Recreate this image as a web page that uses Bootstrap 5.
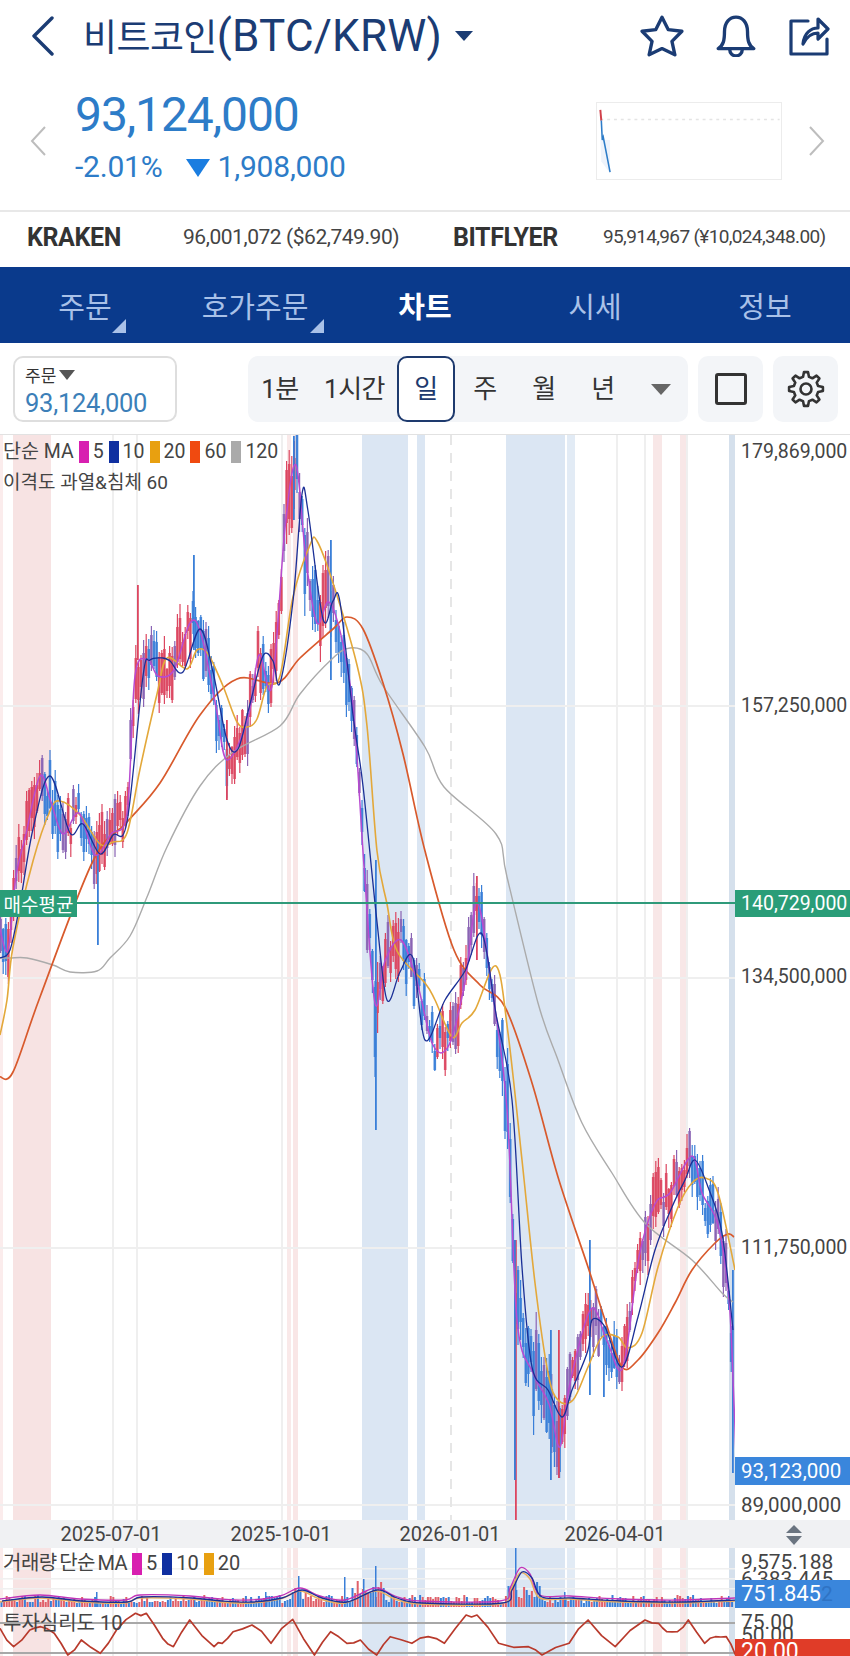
<!DOCTYPE html>
<html lang="ko">
<head>
<meta charset="utf-8">
<title>비트코인 차트</title>
<link href="https://cdn.jsdelivr.net/npm/bootstrap@5.3.0/dist/css/bootstrap.min.css" rel="stylesheet">
<style>
html,body{margin:0;background:#fff}
body{width:850px;height:1656px;overflow:hidden;font-family:Roboto,"Noto Sans CJK KR",sans-serif;color:#333}
.hdr{height:72px;padding-left:31px;padding-right:20px;color:#1b3c74}
.hdr-chev{width:24px;height:40px}
.hdr-title{margin-left:28px;line-height:1;white-space:nowrap}
.hdr-kr{font-size:37px;letter-spacing:-.6px;font-family:"Noto Sans CJK KR",sans-serif}
.hdr-en{font-size:44px;letter-spacing:.2px}
.hdr-caret{width:0;height:0;margin-left:13px;border-left:9px solid transparent;border-right:9px solid transparent;border-top:10px solid #1b3c74}
.hdr-ico{margin-left:30px}
.pr{height:138px;padding-left:30px;padding-right:25px}
.pr-chev{width:16px;height:30px}
.pr-col{margin-left:29px;margin-bottom:8px;color:#2d7cc8}
.pr-big{font-size:48px;line-height:50px;letter-spacing:-1.1px}
.pr-sub{font-size:30px;line-height:34px;margin-top:10px;letter-spacing:-.2px;white-space:nowrap}
.pr-tri{display:inline-block;width:0;height:0;margin:0 8px 0 23px;border-left:12px solid transparent;border-right:12px solid transparent;border-top:18px solid #1a7de0}
.mini{width:186px;height:78px;margin-left:auto;margin-right:27px;border:1px solid #ececec;display:block}
.ex{height:57px;border-top:2px solid #e8e8e8;white-space:nowrap;padding-left:27px;padding-bottom:4px}
.ex-name{font-weight:700;font-size:25px;letter-spacing:-.4px;color:#333}
.ex-a{width:156px}.ex-b{width:270px}.ex-c{width:150px}
.ex-val{font-size:21px;letter-spacing:-.45px;color:#444}
.ex-val2{font-size:19px;letter-spacing:-.65px;color:#444}
.tabs{height:76px;background:#0a3a8c}
.tabs .nav-link{height:76px;padding:0;line-height:76px;font-size:29px;color:#a9c1e8;position:relative;font-family:"Noto Sans CJK KR",sans-serif}
.tabs .nav-link.on{color:#fff;font-weight:700}
.corner{position:absolute;bottom:10px;width:0;height:0;border-left:14px solid transparent;border-bottom:14px solid #a9c1e8}
.corner-a{left:112px}.corner-b{left:140px}
.tb{height:92px;padding-left:13px;padding-top:13px;border-bottom:1px solid #e2e2e2}
.ord{width:164px;height:66px;border:2px solid #dedede;border-radius:10px;padding:6px 0 0 10px}
.ord-l{font-size:17px;line-height:22px;color:#333;font-family:"Noto Sans CJK KR",sans-serif}
.ord-tri{display:inline-block;width:0;height:0;margin-left:3px;vertical-align:2px;border-left:8px solid transparent;border-right:8px solid transparent;border-top:10px solid #555}
.ord-v{font-size:25.5px;line-height:30px;margin-top:2px;color:#3c7fb8;letter-spacing:-.25px}
.seg{width:440px;height:66px;margin-left:71px;background:#f3f5f8;border-radius:10px}
.seg .btn{height:66px;padding:0;border:2px solid transparent;border-radius:10px;font-size:26px;color:#333;letter-spacing:-.5px;font-family:Roboto,"Noto Sans CJK KR",sans-serif}
.seg .btn.on{background:#fff;border-color:#1e3a6e;color:#1e3a6e}
.w64{width:64px}.w85{width:85px}.w58{width:58px}.w60{width:60px}
.seg-tri{width:0;height:0;margin-left:18px;border-left:10px solid transparent;border-right:10px solid transparent;border-top:11px solid #666}
.sq{width:65px;height:66px;margin-left:10px;background:#f3f5f8;border-radius:10px}
.sq-box{width:32px;height:32px;border:3px solid #333;border-radius:3px}
.panel{position:relative;overflow:hidden}
.p-main{height:1085px}.p-vol{height:60px}.p-sen{height:48px}
.plot{position:absolute;left:0;top:0;width:735px;height:100%;display:block}
.axis{position:absolute;left:735px;top:0;width:115px;height:100%;background:#fff}
.yl{position:absolute;left:6px;font-size:19.5px;line-height:24px;color:#444;white-space:nowrap}
.yb{position:absolute;left:0;width:115px;padding-left:6px;font-size:19.5px;color:#fff;white-space:nowrap}
.y1{top:5px}.y2{top:259px}.y3{top:530px}.y4{top:801px}.y5{top:1058px;font-size:20.5px}
.yg{top:455px;height:27px;line-height:27px;background:#2a9d78}
.yc{top:1022px;height:28px;line-height:28px;background:#3a86dc;font-size:20.5px}
.tag{position:absolute;left:0;top:455px;width:77px;height:27px;line-height:27px;background:#2a9d78;color:#fff;font-size:19px;text-align:center;font-family:"Noto Sans CJK KR",sans-serif}
.lg{position:absolute;left:3px;font-size:19.5px;line-height:24px;color:#444;white-space:nowrap;font-family:Roboto,"Noto Sans CJK KR",sans-serif}
.lg1{top:5px}.lg2{top:36px;font-size:19px}.lg3{top:3px;font-size:20px}.lg4{top:3px;font-size:20px}
.lg-tight{letter-spacing:-.5px;word-spacing:-2px}
.sw{display:inline-block;width:10px;height:22px;margin:0 4px 0 5px;vertical-align:-5px}
.c1{background:#d81fb0}.c2{background:#0f2fa0}.c3{background:#e8a010}.c4{background:#f04a10}.c5{background:#aaa}
.dates{height:28px;background:#f0f1f3;position:relative}
.dt{position:absolute;top:0;width:120px;text-align:center;line-height:28px;font-size:20px;color:#444}
.d1{left:51px}.d2{left:221px}.d3{left:390px}.d4{left:555px}
.updn{position:absolute;left:786px;top:5px;width:16px;height:20px;display:block}
.vl{position:absolute;left:6px;font-size:21px;line-height:22px;color:#444;white-space:nowrap}
.v1{top:3px}.v2{top:20px}.v3{top:35px;left:86px;color:#2f73c4}
.vb{top:32px;height:28px;line-height:28px;font-size:22px;background:#3a86dc}
.s1{top:3px}.s2{top:16px}
.sb{top:31px;height:17px;line-height:26px;font-size:23px;background:#e03c28;overflow:hidden}
</style>
</head>
<body>

<div class="hdr d-flex align-items-center">
  <svg class="hdr-chev" viewBox="0 0 24 40" fill="none" stroke="#1b3c74" stroke-width="3.4" stroke-linecap="round" stroke-linejoin="round"><path d="M21 2 L3 20 L21 38"/></svg>
  <div class="hdr-title"><span class="hdr-kr">비트코인</span><span class="hdr-en">(BTC/KRW)</span></div>
  <div class="hdr-caret"></div>
  <svg class="hdr-ico ms-auto" width="44" height="42" viewBox="0 0 42 40" fill="none" stroke="#1b3c74" stroke-width="3.2" stroke-linejoin="round"><polygon points="21,2 26.9,13.9 40,15.5 30.5,25.1 33.3,38 21,32 8.7,38 11.5,25.1 2,15.5 15.1,13.9"/></svg>
  <svg class="hdr-ico" width="44" height="42" viewBox="0 0 42 40" fill="none" stroke="#1b3c74" stroke-width="3.2" stroke-linejoin="round" stroke-linecap="round"><path d="M4 32 C9 29 10 24 10 16 C10 7 15 2 21 2 S32 7 32 16 C32 24 33 29 38 32 Z"/><path d="M15 33 A6 6 0 0 0 27 33"/></svg>
  <svg class="hdr-ico" width="42" height="42" viewBox="0 0 42 42" fill="none" stroke="#1b3c74" stroke-width="3.2" stroke-linejoin="round" stroke-linecap="round"><path d="M20 6 H3 V39 H39 V24"/><path d="M15 29 C16 18 23 13 30 13 V4 L40 14 L30 24 V18 C24 18 19 21 15 29 Z"/></svg>
</div>

<div class="pr d-flex align-items-center">
  <svg class="pr-chev" viewBox="0 0 16 30" fill="none" stroke="#bdbdbd" stroke-width="2"><path d="M15 1 L2 15 L15 29"/></svg>
  <div class="pr-col">
    <div class="pr-big">93,124,000</div>
    <div class="pr-sub">-2.01%<span class="pr-tri"></span>1,908,000</div>
  </div>
  <svg class="mini" viewBox="0 0 186 78" fill="none">
    <path d="M2 17 H186" stroke="#e4e4e4" stroke-width="1.5" stroke-dasharray="3 4"/>
    <path d="M2 38 L3 60 L12 72 V38 Z" fill="#eef3fb"/>
    <path d="M2 7 L3 18" stroke="#d0404a" stroke-width="2"/>
    <path d="M3 18 L4 38 L5 35 L12 71" stroke="#2d7cc8" stroke-width="1.6"/>
  </svg>
  <svg class="pr-chev" viewBox="0 0 16 30" fill="none" stroke="#bdbdbd" stroke-width="2"><path d="M1 1 L14 15 L1 29"/></svg>
</div>

<div class="ex d-flex align-items-center">
  <div class="ex-name ex-a">KRAKEN</div>
  <div class="ex-val ex-b">96,001,072 ($62,749.90)</div>
  <div class="ex-name ex-c">BITFLYER</div>
  <div class="ex-val2">95,914,967 (¥10,024,348.00)</div>
</div>

<nav class="nav nav-justified tabs">
  <a class="nav-link" href="#">주문<span class="corner corner-a"></span></a>
  <a class="nav-link" href="#">호가주문<span class="corner corner-b"></span></a>
  <a class="nav-link on" href="#">차트</a>
  <a class="nav-link" href="#">시세</a>
  <a class="nav-link" href="#">정보</a>
</nav>

<div class="tb d-flex">
  <div class="ord">
    <div class="ord-l">주문<span class="ord-tri"></span></div>
    <div class="ord-v">93,124,000</div>
  </div>
  <div class="seg d-flex align-items-center">
    <button class="btn w64">1분</button>
    <button class="btn w85">1시간</button>
    <button class="btn w58 on">일</button>
    <button class="btn w60">주</button>
    <button class="btn w58">월</button>
    <button class="btn w60">년</button>
    <div class="seg-tri"></div>
  </div>
  <div class="sq d-flex align-items-center justify-content-center"><div class="sq-box"></div></div>
  <div class="sq d-flex align-items-center justify-content-center">
    <svg id="gear" width="38" height="38" viewBox="-19 -19 38 38" fill="none" stroke="#333" stroke-width="2.6" stroke-linejoin="round"></svg>
  </div>
</div>

<div class="panel p-main">
  <svg class="plot" id="pMain" viewBox="0 435 735 1085"></svg>
  <div class="lg lg1">단순 MA<span class="sw c1"></span>5<span class="sw c2"></span>10<span class="sw c3"></span>20<span class="sw c4"></span>60<span class="sw c5"></span>120</div>
  <div class="lg lg2">이격도 과열&amp;침체 60</div>
  <div class="tag">매수평균</div>
  <div class="axis">
    <div class="yl y1">179,869,000</div>
    <div class="yl y2">157,250,000</div>
    <div class="yb yg">140,729,000</div>
    <div class="yl y3">134,500,000</div>
    <div class="yl y4">111,750,000</div>
    <div class="yb yc">93,123,000</div>
    <div class="yl y5">89,000,000</div>
  </div>
</div>

<div class="dates">
  <div class="dt d1">2025-07-01</div>
  <div class="dt d2">2025-10-01</div>
  <div class="dt d3">2026-01-01</div>
  <div class="dt d4">2026-04-01</div>
  <svg class="updn" viewBox="0 0 16 20" fill="#6a7480"><polygon points="8,0 16,8 0,8"/><polygon points="0,11 16,11 8,20"/></svg>
</div>

<div class="panel p-vol">
  <svg class="plot" id="pVol" viewBox="0 1548 735 60"></svg>
  <div class="lg lg3"><span class="lg-tight">거래량 단순 MA</span><span class="sw c1"></span>5<span class="sw c2"></span>10<span class="sw c3"></span>20</div>
  <div class="axis">
    <div class="vl v1">9,575.188</div>
    <div class="vl v2">6,383.445</div>
    <div class="yb vb">751.845</div>
    <div class="vl v3">2</div>
  </div>
</div>

<div class="panel p-sen">
  <svg class="plot" id="pSen" viewBox="0 1608 735 48"></svg>
  <div class="lg lg4">투자심리도 10</div>
  <div class="axis">
    <div class="vl s1">75.00</div>
    <div class="vl s2">50.00</div>
    <div class="yb sb">20.00</div>
  </div>
</div>

<script src="https://cdn.jsdelivr.net/npm/bootstrap@5.3.0/dist/js/bootstrap.bundle.min.js"></script>
<script>
(function(){
var seed=12345;function R(){seed=(seed*1664525+1013904223)%4294967296;return seed/4294967296}
function rr(a,b){return a+(b-a)*R()}
function smooth(p){var d='M'+p[0][0]+' '+p[0][1];for(var i=0;i<p.length-1;i++){var a=p[Math.max(i-1,0)],b=p[i],c=p[i+1],e=p[Math.min(i+2,p.length-1)];
 d+=' C'+(b[0]+(c[0]-a[0])/6).toFixed(1)+' '+(b[1]+(c[1]-a[1])/6).toFixed(1)+' '+(c[0]-(e[0]-b[0])/6).toFixed(1)+' '+(c[1]-(e[1]-b[1])/6).toFixed(1)+' '+c[0]+' '+c[1]}return d}
function line(d,col,w,extra){return '<path d="'+d+'" fill="none" stroke="'+col+'" stroke-width="'+w+'" '+(extra||'')+'/>'}
function interp(p,x){for(var i=0;i<p.length-1;i++){if(x>=p[i][0]&&x<=p[i+1][0]){var t=(x-p[i][0])/(p[i+1][0]-p[i][0]);return p[i][1]+(p[i+1][1]-p[i][1])*t}}return p[p.length-1][1]}
function bands(y,h){var s='',r=[[0,3,'#fbecec'],[13,51,'#f7e3e3'],[287,291,'#f9e9e9'],[293,298,'#f9e6e6'],[653,662,'#f8e7e7'],[680,687,'#f8e7e7'],
 [362,408,'#dbe6f3'],[417,425,'#dbe6f3'],[506,565,'#dbe6f3'],[567,575,'#e2ebf5'],[729,735,'#d5e0ec']];
 r.forEach(function(b){s+='<rect x="'+b[0]+'" y="'+y+'" width="'+(b[1]-b[0])+'" height="'+h+'" fill="'+b[2]+'"/>'});
 [113,137,282,617,645,687].forEach(function(x){s+='<rect x="'+(x-1)+'" y="'+y+'" width="2" height="'+h+'" fill="#efefef"/>'});
 return s}
var S=850/805;
var price=[[0,880],[8,900],[15,830],[25,790],[38,735],[48,760],[60,790],[75,770],[90,810],[105,790],[120,770],[128,640],[140,625],[150,640],[165,635],[180,590],[190,600],[205,670],[215,720],[235,680],[245,620],[258,650],[270,500],[280,440],[290,530],[300,590],[312,570],[325,610],[335,680],[345,820],[355,950],[365,910],[380,890],[395,930],[410,990],[425,990],[440,930],[452,855],[465,930],[480,1050],[490,1250],[505,1300],[520,1330],[530,1370],[540,1310],[560,1240],[575,1270],[590,1295],[605,1190],[620,1140],[635,1130],[655,1095],[665,1130],[680,1160],[690,1230],[695,1330],[697,1380]].map(function(p){return [Math.round(p[0]*S),Math.round(p[1]*S)]});
var ma10=[[0,958],[10,950],[20,904],[33,829],[50,776],[70,833],[83,824],[100,854],[113,835],[127,822],[143,676],[150,660],[163,658],[170,661],[183,672],[200,629],[213,672],[227,740],[238,749],[250,704],[263,656],[273,661],[280,683],[293,601],[302,494],[308,511],[323,619],[333,601],[340,602],[353,715],[363,786],[377,922],[387,1000],[400,972],[413,958],[425,1040],[445,1000],[465,971],[482,934],[496,1014],[512,1100],[522,1267],[532,1367],[548,1390],[562,1417],[572,1390],[588,1350],[592,1320],[605,1327],[622,1367],[638,1317],[655,1250],[672,1207],[685,1180],[695,1160],[708,1187],[722,1233],[733,1330]];
var ma20=[[0,1035],[7,1000],[13,947],[33,861],[50,811],[60,801],[80,815],[100,844],[113,842],[127,833],[140,769],[157,694],[167,658],[187,669],[197,650],[208,654],[223,686],[237,722],[247,727],[257,719],[267,686],[280,676],[293,597],[310,545],[317,541],[333,583],[357,665],[367,726],[377,851],[387,904],[397,951],[425,983],[435,1000],[452,1037],[462,1023],[475,1010],[496,966],[508,1033],[522,1160],[535,1283],[548,1373],[558,1400],[573,1400],[588,1367],[602,1337],[618,1337],[628,1348],[642,1333],[658,1267],[678,1207],[692,1183],[705,1178],[718,1193],[735,1270]];
var ma60=[[0,1077],[13,1072],[40,997],[93,861],[127,822],[160,783],[200,715],[237,679],[277,683],[300,658],[333,629],[347,617],[363,629],[383,683],[403,754],[425,851],[454,950],[480,985],[505,1007],[532,1083],[558,1177],[588,1267],[605,1320],[622,1367],[638,1360],[658,1333],[675,1303],[692,1270],[715,1243],[728,1234],[734,1237]];
var ma120=[[0,958],[10,958],[27,958],[53,965],[70,972],[97,971],[110,958],[130,936],[147,897],[167,847],[200,786],[233,752],[280,726],[300,694],[333,658],[350,648],[367,654],[383,686],[425,747],[444,787],[496,834],[507,877],[538,1003],[558,1060],[582,1123],[612,1173],[645,1223],[692,1260],[722,1293],[733,1302]];
var RED='#dc4660',BLUE='#3a7fd8',PUR='#8a64b4';
var out=bands(435,1085);
[706,978,1248,1505].forEach(function(y){out+='<rect x="0" y="'+(y-1)+'" width="735" height="2" fill="#efefef"/>'});
out+='<path d="M451 435 V1520" stroke="#e6e6e6" stroke-width="2" stroke-dasharray="10 8"/>';
for(var x=0.5;x<733;x+=2.6){
 var y=interp(price,x),dir=interp(price,x+3)-interp(price,x-3);
 var q=R(),col=(dir+rr(-7,7))>0?BLUE:RED;if(q<.28)col=PUR;
 var big=(y<760&&x>270&&x<330)||(x>500&&x<560)||(x>365&&x<380)?1.5:1;
 var body=rr(6,24)*big,off=rr(-16,16)*big;
 var hi=y+off-body-rr(1,14)*big,lo=y+off+body+rr(1,14)*big;
 out+='<rect x="'+(x-.5).toFixed(1)+'" y="'+hi.toFixed(0)+'" width="1.2" height="'+(lo-hi).toFixed(0)+'" fill="'+col+'"/>';
 out+='<rect x="'+(x-1.2).toFixed(1)+'" y="'+(y+off-body).toFixed(0)+'" width="2.6" height="'+(2*body).toFixed(0)+'" fill="'+col+'" opacity=".9"/>';
}
[[97,840,945,BLUE],[193,555,650,BLUE],[137,585,660,RED],[375,860,1130,BLUE],[293,436,520,BLUE],[515,1240,1520,RED],[514,1240,1480,BLUE],[550,1330,1480,BLUE],[558,1330,1478,RED],[589,1240,1395,BLUE],[476,876,960,RED],[226,720,800,RED],[330,540,680,BLUE],[732,1270,1473,BLUE],[603,1340,1397,BLUE]].forEach(function(w){
 out+='<rect x="'+w[0]+'" y="'+w[1]+'" width="1.8" height="'+(w[2]-w[1])+'" fill="'+w[3]+'"/>'});
out+=line(smooth(ma120),'#ababab',1.4);
out+=line(smooth(ma60),'#d85a2c',1.7);
out+=line(smooth(ma20),'#e3a83a',1.6);
out+=line(smooth(price),'#b84ad0',1.5);
out+=line(smooth(ma10),'#1a2f96',1.3);
out+='<rect x="0" y="902" width="735" height="2" fill="#2f9a7a"/>';
document.getElementById('pMain').innerHTML=out;

var v=bands(1548,60);
[1568,1578,1588,1598].forEach(function(y){v+='<rect x="0" y="'+y+'" width="735" height="1.5" fill="#f0f0f0"/>'});
var bumps=[[290,305,1],[350,385,1.3],[506,540,1.4]];
for(var xx=0.5;xx<733;xx+=2.6){
 var h=rr(4,12);bumps.forEach(function(b){if(xx>b[0]&&xx<b[1])h+=rr(2,12)*b[2]});
 v+='<rect x="'+xx.toFixed(1)+'" y="'+(1607-h).toFixed(0)+'" width="2" height="'+h.toFixed(0)+'" fill="'+(R()>.5?BLUE:'#e0606a')+'"/>';
}
[[515,1548],[375,1566],[298,1576],[344,1577],[363,1579],[96,1592],[194,1596],[265,1592],[564,1592],[728,1596]].forEach(function(s){
 v+='<rect x="'+s[0]+'" y="'+s[1]+'" width="1.5" height="'+(1607-s[1])+'" fill="'+BLUE+'"/>'});
var vm=[[0,1601],[40,1597],[80,1601],[125,1602],[140,1597],[190,1598],[220,1601],[250,1602],[280,1598],[300,1590],[320,1598],[345,1602],[375,1590],[395,1598],[420,1603],[500,1603],[510,1590],[520,1572],[530,1578],[540,1597],[570,1598],[620,1601],[680,1602],[735,1600]];
v+=line(smooth(vm.map(function(p){return [p[0],p[1]+1]})),'#e8b060',1.6);
v+=line(smooth(vm.map(function(p){return [p[0],p[1]+(p[1]<1590?-4:-2)]})),'#c034b8',1.3);
v+=line(smooth(vm.map(function(p){return [p[0]+2,p[1]]})),'#1a2f96',1.3);
document.getElementById('pVol').innerHTML=v;

var sen=[[0,445],[25,500],[55,450],[75,440],[100,460],[125,525],[150,480],[185,520],[215,450],[250,400],[270,400],[300,475],[320,500],[350,420],[395,500],[410,490],[430,455],[465,435],[500,490],[540,418],[580,525],[610,455],[640,490],[665,480],[695,525],[720,470],[760,490],[790,470],[820,490],[860,405],[880,405],[920,490],[975,500],[1000,525],[1050,490],[1085,420],[1135,500],[1190,420],[1215,430],[1230,455],[1250,455],[1270,420],[1300,490],[1320,470],[1340,470],[1357,525]];
var pts=[];sen.forEach(function(p,i){var X=p[0]/1.845,Y=1480+p[1]/3;pts.push(X.toFixed(1)+' '+Y.toFixed(1));
 if(i<sen.length-1){var n=sen[i+1],mx=(p[0]+n[0])/2/1.845,my=1480+(p[1]+n[1])/6+rr(-3,3);pts.push(mx.toFixed(1)+' '+my.toFixed(1))}});
var s=bands(1608,48);
s+='<rect x="0" y="1622" width="735" height="2" fill="#a8a8a8"/><rect x="0" y="1652" width="735" height="2" fill="#a8a8a8"/>';
s+=line('M'+pts.join(' L'),'#b83a2c',1.7,'stroke-linejoin="round"');
document.getElementById('pSen').innerHTML=s;

function P(r,ang){return (r*Math.cos(ang)).toFixed(1)+' '+(r*Math.sin(ang)).toFixed(1)}
var g='',n=8,a0=-Math.PI/2;
for(var i=0;i<n;i++){var a=a0+i*2*Math.PI/n,t=Math.PI/n;
 g+=(i?'L':'M')+P(12.5,a-t*.62)+' L'+P(17,a-t*.3)+' L'+P(17,a+t*.3)+' L'+P(12.5,a+t*.62)+' ';}
document.getElementById('gear').innerHTML='<path d="'+g+'Z"/><circle r="5.5"/>';
})();
</script>
</body>
</html>
